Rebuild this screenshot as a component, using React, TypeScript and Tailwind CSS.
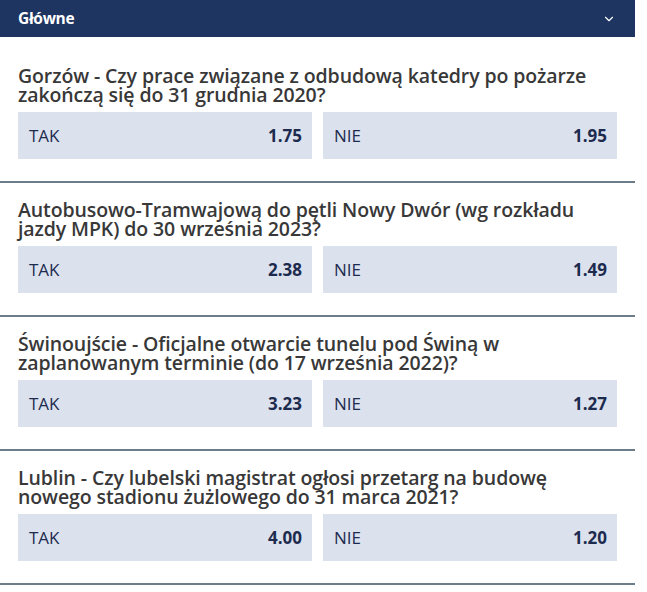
import { ChevronDown } from 'lucide-react';

type Market = {
  id: number;
  question: string;
  yes: string;
  no: string;
};

const markets: Market[] = [
  {
    id: 1,
    question: 'Gorzów - Czy prace związane z odbudową katedry po pożarze zakończą się do 31 grudnia 2020?',
    yes: '1.75',
    no: '1.95',
  },
  {
    id: 2,
    question: 'Autobusowo-Tramwajową do pętli Nowy Dwór (wg rozkładu jazdy MPK) do 30 września 2023?',
    yes: '2.38',
    no: '1.49',
  },
  {
    id: 3,
    question: 'Świnoujście - Oficjalne otwarcie tunelu pod Świną w zaplanowanym terminie (do 17 września 2022)?',
    yes: '3.23',
    no: '1.27',
  },
  {
    id: 4,
    question: 'Lublin - Czy lubelski magistrat ogłosi przetarg na budowę nowego stadionu żużlowego do 31 marca 2021?',
    yes: '4.00',
    no: '1.20',
  },
];

function OddButton({ label, odd }: { label: string; odd: string }) {
  return (
    <button className="flex h-[47px] items-center justify-between bg-[#dbe2ee] pl-[11px] pr-[10px] text-[#1d2b4f]">
      <span className="text-[17px] font-normal">{label}</span>
      <span className="text-[17px] font-bold">{odd}</span>
    </button>
  );
}

export default function App() {
  return (
    <div className="min-h-screen bg-white font-['Open_Sans',sans-serif]">
      <div className="w-[635px]">
        {/* Section header */}
        <div className="flex h-[37px] items-center justify-between bg-[#1e3461] pl-[18px] pr-[19px] text-white">
          <span className="text-[15.5px] font-bold tracking-[-0.3px]">Główne</span>
          <ChevronDown size={14} strokeWidth={2} />
        </div>

        {/* Markets */}
        {markets.map((m, i) => (
          <div
            key={m.id}
            className={`border-b-2 border-[#6d7c89] px-[18px] pb-[22px] ${i === 0 ? 'pt-[29px]' : 'pt-[17px]'}`}
          >
            <h3 className="mb-[8px] text-[19.5px] font-semibold leading-[19px] tracking-[-0.1px] text-[#383838]">
              {m.question}
            </h3>
            <div className="grid grid-cols-2 gap-[11px]">
              <OddButton label="TAK" odd={m.yes} />
              <OddButton label="NIE" odd={m.no} />
            </div>
          </div>
        ))}
      </div>
    </div>
  );
}
